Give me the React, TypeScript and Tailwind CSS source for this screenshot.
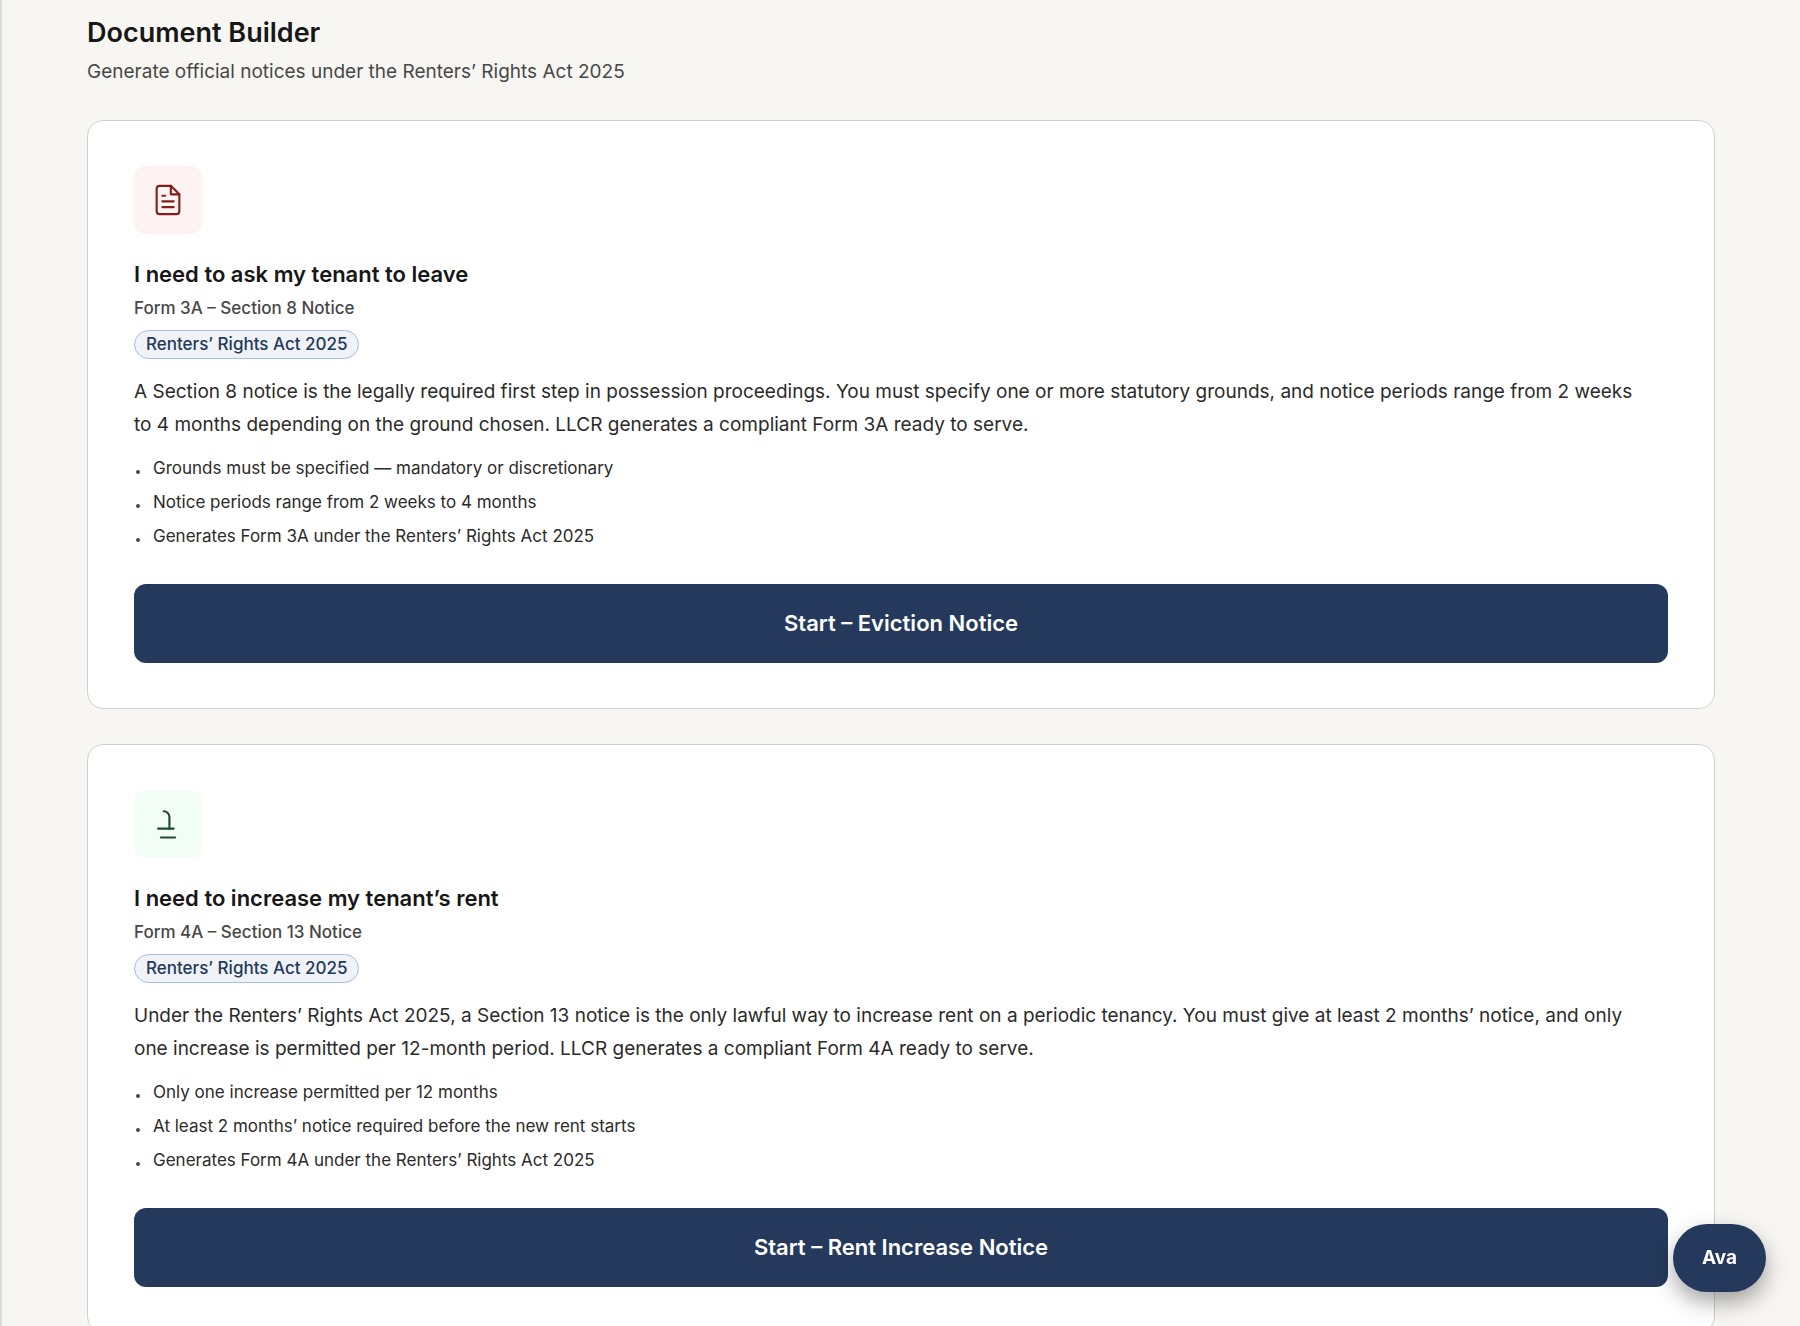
import type { ReactNode } from "react";

type Notice = {
  id: string;
  icon: ReactNode;
  iconStyle: string;
  title: string;
  form: string;
  description: string;
  points: string[];
  action: string;
};

const FileIcon = () => (
  <svg width="34" height="34" viewBox="0 0 24 24" fill="none" stroke="currentColor" strokeWidth="1.5" strokeLinecap="round" strokeLinejoin="round" aria-hidden="true">
    <path d="M14 2H6a2 2 0 0 0-2 2v16a2 2 0 0 0 2 2h12a2 2 0 0 0 2-2V8z" />
    <path d="M14 2v6h6" />
    <path d="M16 13H8" />
    <path d="M16 17H8" />
    <path d="M10 9H8" />
  </svg>
);

const PoundIcon = () => (
  <svg width="34" height="34" viewBox="0 0 24 24" fill="none" stroke="currentColor" strokeWidth="1.5" strokeLinecap="round" strokeLinejoin="round" aria-hidden="true">
    <path d="M9 3a4 4 0 0 1 4 4v8.5" />
    <path d="M5 15.3h11" />
    <path d="M7 21.5h10" />
  </svg>
);

const notices: Notice[] = [
  {
    id: "eviction",
    icon: <FileIcon />,
    iconStyle: "bg-[#fdf3f2] text-[#84201c]",
    title: "I need to ask my tenant to leave",
    form: "Form 3A – Section 8 Notice",
    description:
      "A Section 8 notice is the legally required first step in possession proceedings. You must specify one or more statutory grounds, and notice periods range from 2 weeks to 4 months depending on the ground chosen. LLCR generates a compliant Form 3A ready to serve.",
    points: [
      "Grounds must be specified — mandatory or discretionary",
      "Notice periods range from 2 weeks to 4 months",
      "Generates Form 3A under the Renters’ Rights Act 2025",
    ],
    action: "Start – Eviction Notice",
  },
  {
    id: "rent",
    icon: <PoundIcon />,
    iconStyle: "bg-[#f2fdf5] text-[#1f4d2c]",
    title: "I need to increase my tenant’s rent",
    form: "Form 4A – Section 13 Notice",
    description:
      "Under the Renters’ Rights Act 2025, a Section 13 notice is the only lawful way to increase rent on a periodic tenancy. You must give at least 2 months’ notice, and only one increase is permitted per 12-month period. LLCR generates a compliant Form 4A ready to serve.",
    points: [
      "Only one increase permitted per 12 months",
      "At least 2 months’ notice required before the new rent starts",
      "Generates Form 4A under the Renters’ Rights Act 2025",
    ],
    action: "Start – Rent Increase Notice",
  },
];

function NoticeCard({ notice }: { notice: Notice }) {
  return (
    <section className="rounded-2xl border border-[#d0d0ce] bg-white px-[46px] py-[45px]">
      <div className={`flex size-[68px] items-center justify-center rounded-xl ${notice.iconStyle}`}>
        {notice.icon}
      </div>
      <h2 className="mt-6 text-[22px] leading-8 font-semibold text-[#171717]">{notice.title}</h2>
      <p className="mt-1 text-[17px] leading-7 font-medium text-[#484846]">{notice.form}</p>
      <span className="mt-2 flex h-[29px] w-fit items-center rounded-full border border-[#a5bce9] bg-[#eff2f6] px-[11px] text-[17px] font-medium text-[#24395b]">
        Renters’ Rights Act 2025
      </span>
      <p className="mt-4 pr-8 text-[19px] leading-[33px] text-[#2b2b2a]">{notice.description}</p>
      <ul className="mt-[13px] flex flex-col gap-[6px]">
        {notice.points.map((point) => (
          <li key={point} className="flex items-center gap-[13px] text-[17px] leading-7 text-[#2b2b2a]">
            <span className="mt-2 ml-[2px] size-1 rounded-full bg-[#484846]" />
            {point}
          </li>
        ))}
      </ul>
      <button type="button" className="mt-[34px] h-[79px] w-full rounded-xl bg-[#24395b] text-[22px] font-semibold text-white">
        {notice.action}
      </button>
    </section>
  );
}

export default function App() {
  return (
    <div className="h-screen overflow-hidden border-l-2 border-[#dcdcda] bg-[#f7f6f3] font-['Inter',sans-serif]">
      <main className="px-[85px] pt-[13px]">
        <h1 className="text-[27px] leading-10 font-semibold text-[#171717]">Document Builder</h1>
        <p className="mt-[3px] text-[19px] leading-8 text-[#484846]">
          Generate official notices under the Renters’ Rights Act 2025
        </p>
        <div className="mt-8 flex flex-col gap-[35px]">
          {notices.map((notice) => (
            <NoticeCard key={notice.id} notice={notice} />
          ))}
        </div>
      </main>
      <button
        type="button"
        className="fixed right-[34px] bottom-[34px] h-[68px] w-[93px] rounded-full bg-[#24395b] text-[19px] font-bold text-white shadow-[0_10px_22px_rgba(0,0,0,0.35)]"
      >
        Ava
      </button>
    </div>
  );
}
